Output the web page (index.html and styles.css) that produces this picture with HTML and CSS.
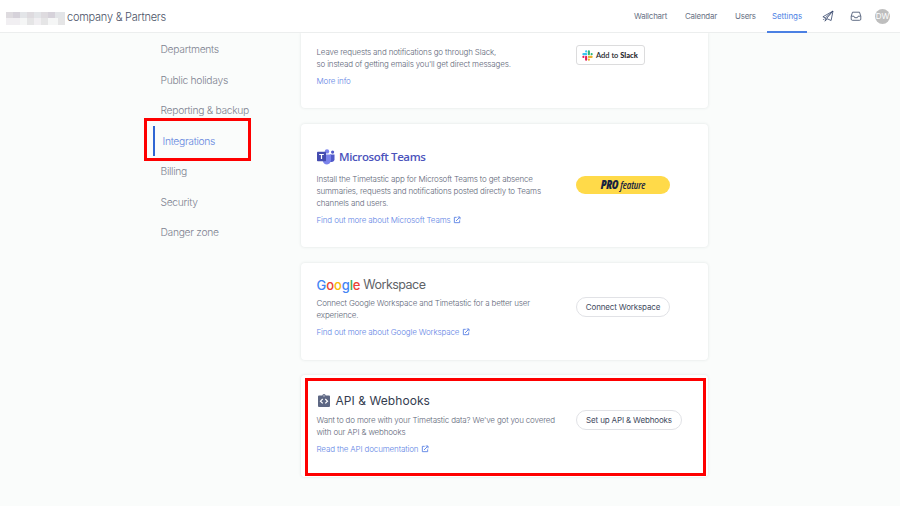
FILE: index.html
```html
<!DOCTYPE html>
<html lang="en">
<head>
<meta charset="utf-8">
<title>Integrations</title>
<link rel="stylesheet" href="styles.css">
</head>
<body>
<svg class="defs" aria-hidden="true">
  <symbol id="external" viewBox="0 0 24 24"><path d="M11 4H4v16h16v-7M14 3h7v7M20 4 9 15" fill="none" stroke="currentColor" stroke-width="2.800"/></symbol>
</svg>
<header class="topbar">
  <div class="brand">
    <svg class="redacted" viewBox="0 0 59 13" shape-rendering="crispEdges">
      <path fill="#dedbdf" d="M0 0h59v6H0z"/><path fill="#f1eff2" d="M0 6h59v7H0z"/>
      <path fill="#d6d2da" d="M7 0h7v6H7zM42 0h7v6h-7z"/><path fill="#e3e5e8" d="M14 0h7v6h-7zM28 0h7v6h-7zM49 0h10v6H49z"/>
      <path fill="#e5e5e6" d="M21 6h7v7h-7zM35 6h7v7h-7zM52 6h7v7h-7z"/><path fill="#f5f6f6" d="M14 6h7v7h-7zM42 6h10v7H42z"/>
    </svg>
    <span>company &amp; Partners</span>
  </div>
  <nav class="nav">
    <a class="wallchart">Wallchart</a><a class="calendar">Calendar</a><a class="users">Users</a><a class="current">Settings</a>
    <svg class="plane" viewBox="0 0 12 12"><path d="M11 1 .9 6.800l2.400 1.100L11 1 4.600 8.500l4.500 2zM3.300 7.900v3l1.900-2.100M2 8.900l-.8.9M3.300 10.900l-.6.4" fill="none" stroke="#35456b" stroke-width=".8" stroke-linejoin="round"/></svg>
    <svg class="tray" viewBox="0 0 12 12"><path d="M1.200 6.200 2.500 2.200h7l1.300 4v2.900q0 1.200-1.200 1.200H2.400Q1.200 10.300 1.200 9.100zM1.300 6.200h2.600l.8 1.500h2.600l.8-1.500h2.600" fill="none" stroke="#45536f" stroke-width=".85" stroke-linejoin="round"/></svg>
    <span class="avatar">DW</span>
  </nav>
</header>
<div class="layout">
  <aside class="sidebar">
    <a>Departments</a><a>Public holidays</a><a>Reporting &amp; backup</a><a class="active">Integrations</a><a>Billing</a><a>Security</a><a>Danger zone</a>
    <div class="mark mark-nav"></div>
  </aside>
  <main class="cards">
    <section class="card slack">
      <div class="info">
        <p>Leave requests and notifications go through Slack,<br>so instead of getting emails you'll get direct messages.</p>
        <a class="link">More info</a>
      </div>
      <div class="action"><a class="slack-button">
        <svg viewBox="0 0 24 24"><g fill="none" stroke-width="4.600" stroke-linecap="round"><path stroke="#36c5f0" d="M3 9h6M9 3h.1"/><path stroke="#2eb67d" d="M15 3v6M21 9h.1"/><path stroke="#ecb22e" d="M15 15h6M15 21h.1"/><path stroke="#e01e5a" d="M9 15v6M3 15h.1"/></g></svg>
        <span>Add to <b>Slack</b></span></a></div>
    </section>
    <section class="card teams">
      <div class="info">
        <h2><svg class="teams-logo" viewBox="0 0 18 16"><circle cx="10" cy="2.400" r="2.200" fill="#7b83eb"/><circle cx="15.600" cy="3.100" r="1.600" fill="#5059c9"/><path fill="#5059c9" d="M13 5.500h4.500v4.800q-.3 2.700-3 2.700H13z"/><path fill="#7b83eb" d="M6 5.500h8v5.600q-.5 4.200-4 4.400-3.500 0-4.400-4z"/><rect y="2.800" width="9" height="9.400" rx=".8" fill="#444cb0"/><path fill="#fff" d="M2.200 4.900h4.600v1.200H5.100v4H3.900v-4H2.200z"/></svg><span>Microsoft Teams</span></h2>
        <p>Install the Timetastic app for Microsoft Teams to get absence<br>summaries, requests and notifications posted directly to Teams<br>channels and users.</p>
        <a class="link">Find out more about Microsoft Teams <svg><use href="#external"/></svg></a>
      </div>
      <div class="action"><span class="pro"><b>PRO</b><i>feature</i></span></div>
    </section>
    <section class="card google">
      <div class="info">
        <h2><span class="g"><span class="blue">G</span><span class="red">o</span><span class="yellow">o</span><span class="blue">g</span><span class="green">l</span><span class="red">e</span></span><span class="w">Workspace</span></h2>
        <p>Connect Google Workspace and Timetastic for a better user<br>experience.</p>
        <a class="link">Find out more about Google Workspace <svg><use href="#external"/></svg></a>
      </div>
      <div class="action"><a class="button">Connect Workspace</a></div>
    </section>
    <section class="card api">
      <div class="info">
        <h2><svg class="api-logo" viewBox="0 0 12 13"><path fill="#5d6783" d="M1 1.500h3.300Q4.500 0 6 0t1.700 1.500H11q1 0 1 1V12q0 1-1 1H1q-1 0-1-1V2.500q0-1 1-1z"/><circle cx="6" cy="1.900" r=".6" fill="#fff"/><path d="M4.700 5 2.500 7.200l2.200 2.200M7.300 5l2.200 2.200-2.200 2.200" fill="none" stroke="#fff" stroke-width="1.200"/></svg><span>API &amp; Webhooks</span></h2>
        <p>Want to do more with your Timetastic data? We've got you covered<br>with our API &amp; webhooks</p>
        <a class="link">Read the API documentation <svg><use href="#external"/></svg></a>
      </div>
      <div class="action"><a class="button setup">Set up API &amp; Webhooks</a></div>
      <div class="mark mark-api"></div>
    </section>
  </main>
</div>
</body>
</html>
```

FILE: styles.css
```css
* { box-sizing: border-box; }
body { margin: 0; height: 506px; overflow: hidden; background: #fafcfb; color: #5e6678; font: 300 8px/12px Inter, sans-serif; }
.defs { position: absolute; width: 0; height: 0; }
.topbar { display: flex; justify-content: space-between; height: 33px; background: #fff; border-bottom: 1px solid #eceeee; }
.brand { display: flex; align-items: center; gap: 2px; padding: 1px 0 0 6px; font-size: 11px; letter-spacing: -.24px; color: #4c5367; white-space: nowrap; }
.redacted { width: 59px; height: 13px; margin-top: 3px; }
.nav { display: flex; align-items: center; padding-right: 10px; font-size: 7.900px; font-weight: 400; letter-spacing: -.2px; color: #687184; }
.nav a { white-space: nowrap; }
.wallchart { width: 51px; }
.calendar { width: 50px; }
.users { width: 32px; }
.nav .current { width: 40px; height: 33px; padding-top: 10px; text-align: center; letter-spacing: 0; color: #4b7fe5; border-bottom: 2px solid #4b80e3; }
.plane { width: 12px; height: 12px; margin-left: 15px; }
.tray { width: 12px; height: 12px; margin-left: 16px; }
.avatar { width: 15px; height: 15px; margin-left: 13px; border-radius: 50%; background: #bebebe; color: #fff; text-align: center; font-size: 8px; line-height: 15px; }
.layout { display: grid; grid-template-columns: 148px 407px; padding-left: 153px; }
.sidebar { position: relative; display: flex; flex-direction: column; padding-top: 1px; color: #7d8290; font-size: 10.300px; letter-spacing: -.3px; }
.sidebar a { height: 30.500px; line-height: 31px; padding-left: 7.500px; white-space: nowrap; }
.sidebar .active { color: #6486de; border-left: 2px solid #2f66d3; }
.mark { position: absolute; border: 3px solid #fe0000; pointer-events: none; }
.mark-nav { left: -9px; top: 85px; width: 107px; height: 43px; }
.mark-api { left: 4px; top: 3px; width: 401px; height: 98px; }
.cards { display: flex; flex-direction: column; }
.card { position: relative; display: grid; grid-template-columns: 259.500px 1fr; padding-left: 15.500px; background: #fff; border-radius: 4px; box-shadow: 0 0 3px rgba(40,60,60,.13); white-space: nowrap; }
.slack { height: 75px; padding-top: 12px; border-radius: 0 0 4px 4px; clip-path: inset(0 -6px -6px -6px); }
.teams { height: 123px; margin-top: 16px; padding-top: 23px; }
.google { height: 97px; margin-top: 16px; padding-top: 12px; }
.api { height: 102px; margin-top: 15px; padding-top: 16px; }
p { margin: 0 0 6px; letter-spacing: -.162px; }
.slack p { padding-top: 1px; margin-bottom: 5px; }
.link { display: flex; align-items: center; color: #5f85e5; letter-spacing: -.14px; }
.link svg { width: 8px; height: 8px; margin-left: 2.500px; }
h2 { display: flex; align-items: center; height: 20px; margin: 0; font-size: 13px; font-weight: 400; }
.teams h2 { margin-bottom: 6px; color: #4b53bc; font: 600 11.500px/20px "Open Sans", sans-serif; letter-spacing: -.38px; }
.teams p { margin-bottom: 5px; }
.google h2 { margin-bottom: 2px; color: #5f6368; font: 400 13px/20px Inter, sans-serif; gap: 3px; }
.google p { margin-bottom: 5px; }
.w { font-size: 12.500px; letter-spacing: -.52px; }
.api h2 { margin-bottom: 3px; color: #343d50; font-size: 12px; letter-spacing: .06px; }
.api p { margin-bottom: 5px; }
.teams-logo { width: 18px; height: 16px; margin-right: 4.500px; }
.api-logo { width: 12px; height: 13px; margin: -2px 6px 0 1px; }
.blue { color: #4285f4; } .red { color: #ea4335; } .yellow { color: #fbbc05; } .green { color: #34a853; }
.g { font-weight: 500; letter-spacing: -.1px; }
.button { display: flex; align-items: center; justify-content: center; width: 94px; height: 20px; border: 1px solid #e1e2e6; border-radius: 10px; color: #424a60; font-weight: 400; letter-spacing: -.15px; }
.setup { width: 106px; }
.google .action { padding-top: 22px; }
.api .action { padding-top: 19px; }
.teams .action { padding-top: 29px; }
.slack-button { display: flex; align-items: center; gap: 3px; width: 69px; height: 20px; padding-left: 5px; border: 1px solid #dcdcdd; border-radius: 3px; color: #27272b; font: 600 7.500px/12px Lato, sans-serif; }
.slack-button span { padding-top: 1px; }
.slack-button b { font-weight: 900; }
.slack-button svg { width: 11px; height: 11px; }
.pro { display: flex; align-items: center; justify-content: center; gap: 2px; width: 94px; height: 18px; border-radius: 9px; background: #ffda49; color: #172340; font: 11.500px/18px "Open Sans", sans-serif; letter-spacing: -.15px; }
.pro b { font-weight: 800; font-style: italic; font-stretch: 75%; }
.pro i { font-size: 10.500px; font-weight: 600; font-stretch: 75%; }
```
